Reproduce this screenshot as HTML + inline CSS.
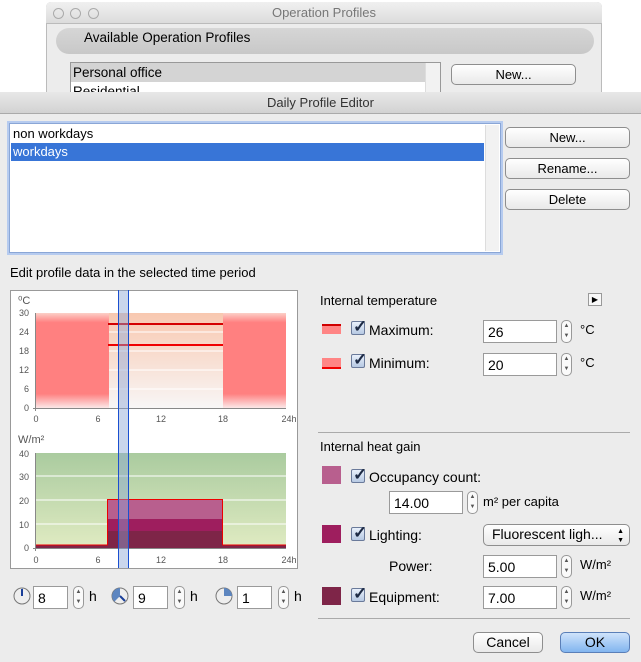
<!DOCTYPE html>
<html><head><meta charset="utf-8"><style>
*{box-sizing:border-box}
body{margin:0;width:641px;height:662px;background:#fff;position:relative;overflow:hidden;font-family:"Liberation Sans",sans-serif;font-size:13px;color:#000}
.a{position:absolute}
.btn{position:absolute;height:21px;border:1px solid #8e8e8e;border-radius:5px;background:linear-gradient(#fff,#e9e9e9);text-align:center;line-height:19px;font-size:13px}
.inp{position:absolute;height:23px;border:1px solid #9a9a9a;background:#fff;padding-left:4px;line-height:22px;font-size:14px}
.sp{position:absolute;width:11px;height:23px;border:1px solid #999;border-radius:5px;background:#fafafa;font-size:6px;line-height:10px;text-align:center;color:#555}
.cb{position:absolute;width:14px;height:14px;border:1px solid #6a7a9a;border-radius:2px;background:linear-gradient(#e8f0fb,#b7c9e3)}
.cb:after{content:"✓";position:absolute;left:1px;top:-5px;font-size:17px;font-weight:bold;color:#1d2a44}
.sw{position:absolute;width:19px;height:18px}
</style></head><body>
<!-- back window -->
<div class="a" style="left:46px;top:2px;width:556px;height:95px;background:#ececec;border:1px solid #bbb;border-radius:5px 5px 0 0"></div>
<div class="a" style="left:46px;top:2px;width:556px;height:22px;background:linear-gradient(#f0f0f0,#dcdcdc);border-radius:5px 5px 0 0;border-bottom:1px solid #bbb;text-align:center;line-height:22px;color:#777">Operation Profiles</div>
<div class="a" style="left:53px;top:8px;width:11px;height:11px;border:1px solid #aaa;border-radius:50%"></div>
<div class="a" style="left:70px;top:8px;width:11px;height:11px;border:1px solid #aaa;border-radius:50%"></div>
<div class="a" style="left:88px;top:8px;width:11px;height:11px;border:1px solid #aaa;border-radius:50%"></div>
<div class="a" style="left:56px;top:28px;width:538px;height:26px;background:linear-gradient(#d6d6d6,#c8c8c8);border-radius:13px;padding-left:28px;line-height:20px;font-size:13.5px">Available Operation Profiles</div>
<div class="a" style="left:70px;top:62px;width:371px;height:40px;background:#fff;border:1px solid #999"></div>
<div class="a" style="left:425px;top:63px;width:15px;height:38px;background:#f2f2f2;border-left:1px solid #ddd"></div>
<div class="a" style="left:71px;top:63px;width:354px;height:19px;background:#d4d4d4;padding-left:2px;line-height:19px;font-size:13.5px">Personal office</div>
<div class="a" style="left:73px;top:82px;line-height:19px;font-size:13.5px">Residential</div>
<div class="btn" style="left:451px;top:64px;width:125px">New...</div>
<!-- front window -->
<div class="a" style="left:0;top:92px;width:641px;height:570px;background:#ececec"></div>
<div class="a" style="left:0;top:92px;width:641px;height:22px;background:linear-gradient(#e8e8e8,#d2d2d2);border-bottom:1px solid #aaa;text-align:center;line-height:22px;color:#333">Daily Profile Editor</div>
<div class="a" style="left:9px;top:123px;width:492px;height:130px;background:#fff;border:1px solid #8aa6d6;box-shadow:0 0 0 2px #b6cbef"></div>
<div class="a" style="left:485px;top:125px;width:14px;height:126px;background:#f2f2f2;border-left:1px solid #ddd"></div>
<div class="a" style="left:13px;top:125px;line-height:18px">non workdays</div>
<div class="a" style="left:11px;top:143px;width:473px;height:18px;background:#3875d7;color:#fff;padding-left:2px;line-height:18px">workdays</div>
<div class="btn" style="left:505px;top:127px;width:125px">New...</div>
<div class="btn" style="left:505px;top:158px;width:125px">Rename...</div>
<div class="btn" style="left:505px;top:189px;width:125px">Delete</div>
<div class="a" style="left:10px;top:265px;font-size:13px">Edit profile data in the selected time period</div>
<!-- chart -->
<svg class="a" style="left:10px;top:290px" width="288" height="279" viewBox="10 290 288 279" font-family="Liberation Sans" font-size="9" fill="#555">
<defs>
<linearGradient id="r" x1="0" y1="0" x2="0" y2="1"><stop offset="0" stop-color="#fcd0c8"/><stop offset=".1" stop-color="#ff8080"/><stop offset=".85" stop-color="#ff8080"/><stop offset="1" stop-color="#fbe8e8"/></linearGradient>
<linearGradient id="w" x1="0" y1="0" x2="0" y2="1"><stop offset="0" stop-color="#f8c8b0"/><stop offset="1" stop-color="#f8f6f6"/></linearGradient>
<linearGradient id="g" x1="0" y1="0" x2="0" y2="1"><stop offset="0" stop-color="#aacb9f"/><stop offset="1" stop-color="#e0ebc2"/></linearGradient>
</defs>
<rect x="10.5" y="290.5" width="287" height="278" fill="#fff" stroke="#999"/>
<text x="18" y="304" font-size="11">⁰C</text>
<rect x="36" y="313" width="250" height="95" fill="url(#r)"/>
<rect x="109" y="313" width="114" height="95" fill="url(#w)"/>
<g stroke="#fff" stroke-width="1"><line x1="109" y1="332" x2="223" y2="332"/><line x1="109" y1="351" x2="223" y2="351"/><line x1="109" y1="370" x2="223" y2="370"/><line x1="109" y1="389" x2="223" y2="389"/></g>
<line x1="108" y1="324" x2="223" y2="324" stroke="#d40000" stroke-width="2"/>
<line x1="108" y1="345" x2="223" y2="345" stroke="#f00000" stroke-width="2"/>
<g stroke="#888"><line x1="35.5" y1="313" x2="35.5" y2="411"/><line x1="33" y1="408.5" x2="286" y2="408.5"/></g>
<g text-anchor="end"><text x="29" y="316">30</text><text x="29" y="335">24</text><text x="29" y="354">18</text><text x="29" y="373">12</text><text x="29" y="392">6</text><text x="29" y="411">0</text></g>
<g text-anchor="middle"><text x="36" y="422">0</text><text x="98" y="422">6</text><text x="161" y="422">12</text><text x="223" y="422">18</text><text x="289" y="422">24h</text></g>
<text x="18" y="443" font-size="11">W/m²</text>
<rect x="36" y="453" width="250" height="95" fill="url(#g)"/>
<g stroke="#fff"><line x1="36" y1="476" x2="286" y2="476"/><line x1="36" y1="500" x2="286" y2="500"/><line x1="36" y1="524" x2="286" y2="524"/></g>
<rect x="107" y="499" width="115" height="20" fill="#b85f8e"/>
<rect x="107" y="519" width="115" height="12" fill="#9e1e5e"/>
<rect x="107" y="531" width="115" height="17" fill="#7e2548"/>
<rect x="36" y="545" width="250" height="3" fill="#7e2548"/>
<path d="M36 545H107.5V499.5H222.5V545H286" fill="none" stroke="#e00" stroke-width="1"/>
<g stroke="#888"><line x1="35.5" y1="453" x2="35.5" y2="551"/><line x1="33" y1="548.5" x2="286" y2="548.5"/></g>
<g text-anchor="end"><text x="29" y="457">40</text><text x="29" y="480">30</text><text x="29" y="504">20</text><text x="29" y="528">10</text><text x="29" y="551">0</text></g>
<g text-anchor="middle"><text x="36" y="563">0</text><text x="98" y="563">6</text><text x="161" y="563">12</text><text x="223" y="563">18</text><text x="289" y="563">24h</text></g>
<rect x="118" y="290" width="10" height="278" fill="#8aa4d4" opacity=".45"/>
<line x1="118.5" y1="290" x2="118.5" y2="568" stroke="#1a4fd0"/>
<line x1="128.5" y1="290" x2="128.5" y2="568" stroke="#1a4fd0"/>
</svg>
<!-- clocks -->
<svg class="a" style="left:12px;top:586px" width="20" height="20"><circle cx="10" cy="10" r="8" fill="#eee" stroke="#777"/><path d="M10 10V2A8 8 0 0 1 10.5 2Z" fill="#5d86c0"/><line x1="10" y1="10" x2="10" y2="3" stroke="#1a3f99" stroke-width="2"/></svg>
<div class="inp" style="left:33px;top:586px;width:35px">8</div><div class="sp" style="left:73px;top:586px">▲<br>▼</div><div class="a" style="left:89px;top:588px;font-size:14px">h</div>
<svg class="a" style="left:110px;top:586px" width="20" height="20"><circle cx="10" cy="10" r="8" fill="#eee" stroke="#777"/><path d="M10 10V2A8 8 0 0 1 15.6 15.6Z" fill="#5d86c0" transform="scale(-1 1) translate(-20 0)"/><line x1="10" y1="10" x2="15" y2="15" stroke="#1a3f99" stroke-width="2"/></svg>
<div class="inp" style="left:133px;top:586px;width:35px">9</div><div class="sp" style="left:174px;top:586px">▲<br>▼</div><div class="a" style="left:190px;top:588px;font-size:14px">h</div>
<svg class="a" style="left:214px;top:586px" width="20" height="20"><circle cx="10" cy="10" r="8" fill="#eee" stroke="#777"/><path d="M10 10V2A8 8 0 0 1 18 10Z" fill="#5d86c0"/></svg>
<div class="inp" style="left:237px;top:586px;width:35px">1</div><div class="sp" style="left:278px;top:586px">▲<br>▼</div><div class="a" style="left:294px;top:588px;font-size:14px">h</div>
<!-- right panel -->
<div class="a" style="left:320px;top:293px">Internal temperature</div>
<div class="a" style="left:588px;top:293px;width:14px;height:13px;border:1px solid #999;background:#f8f8f8;font-size:8px;text-align:center;line-height:12px">▶</div>
<div class="sw" style="left:322px;top:324px;height:10px;background:#ff8585;border-top:2px solid #d00000"></div>
<div class="cb" style="left:351px;top:321px"></div><div class="a" style="left:369px;top:322px;font-size:14px">Maximum:</div>
<div class="inp" style="left:483px;top:320px;width:74px">26</div><div class="sp" style="left:561px;top:320px">▲<br>▼</div><div class="a" style="left:580px;top:322px">°C</div>
<div class="sw" style="left:322px;top:358px;height:11px;background:#ff8585;border-bottom:2px solid #f00000"></div>
<div class="cb" style="left:351px;top:354px"></div><div class="a" style="left:369px;top:355px;font-size:14px">Minimum:</div>
<div class="inp" style="left:483px;top:353px;width:74px">20</div><div class="sp" style="left:561px;top:353px">▲<br>▼</div><div class="a" style="left:580px;top:355px">°C</div>
<div class="a" style="left:318px;top:432px;width:312px;height:1px;background:#aaa"></div>
<div class="a" style="left:320px;top:439px">Internal heat gain</div>
<div class="sw" style="left:322px;top:466px;background:#b85f8e"></div>
<div class="cb" style="left:351px;top:469px"></div><div class="a" style="left:369px;top:469px;font-size:14px">Occupancy count:</div>
<div class="inp" style="left:389px;top:491px;width:74px">14.00</div><div class="sp" style="left:467px;top:491px">▲<br>▼</div><div class="a" style="left:483px;top:494px">m² per capita</div>
<div class="sw" style="left:322px;top:525px;background:#9e1e5e"></div>
<div class="cb" style="left:351px;top:527px"></div><div class="a" style="left:369px;top:527px;font-size:14px">Lighting:</div>
<div class="btn" style="left:483px;top:524px;width:147px;text-align:left;padding-left:8px;font-size:14px;height:22px">Fluorescent ligh...<span style="position:absolute;right:5px;top:0;font-size:7px;line-height:9px;padding-top:2px">▲<br>▼</span></div>
<div class="a" style="left:389px;top:558px;font-size:14px">Power:</div>
<div class="inp" style="left:483px;top:555px;width:74px">5.00</div><div class="sp" style="left:561px;top:555px">▲<br>▼</div><div class="a" style="left:580px;top:557px">W/m²</div>
<div class="sw" style="left:322px;top:587px;background:#7e2548"></div>
<div class="cb" style="left:351px;top:588px"></div><div class="a" style="left:369px;top:589px;font-size:14px">Equipment:</div>
<div class="inp" style="left:483px;top:586px;width:74px">7.00</div><div class="sp" style="left:561px;top:586px">▲<br>▼</div><div class="a" style="left:580px;top:588px">W/m²</div>
<div class="a" style="left:318px;top:618px;width:312px;height:1px;background:#aaa"></div>
<div class="btn" style="left:473px;top:632px;width:70px;font-size:14px">Cancel</div>
<div class="btn" style="left:560px;top:632px;width:70px;font-size:14px;background:linear-gradient(#cfe3fb,#82b5ef);border-color:#5a7fb8">OK</div>
</body></html>
